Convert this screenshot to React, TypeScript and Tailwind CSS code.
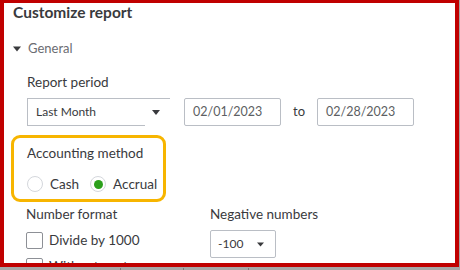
const font = { fontFamily: '"Lato", "Open Sans", sans-serif' };

const Caret = ({ className = '' }: { className?: string }) => (
  <svg viewBox="0 0 10 6" className={className} fill="currentColor">
    <path d="M0 0h10L5 6z" />
  </svg>
);

const DateInput = ({ value }: { value: string }) => (
  <div className="w-[97px] h-[28px] border border-[#babec5] rounded-[2px] flex items-center pl-[8px] text-[12.5px] text-[#5d5f63]">
    {value}
  </div>
);

const Radio = ({ checked, label }: { checked?: boolean; label: string }) => (
  <div className="flex items-center gap-[7px]">
    <span className="w-[16px] h-[16px] rounded-full border border-[#d4d7dc] flex items-center justify-center">
      {checked && <span className="w-[9px] h-[9px] rounded-full bg-[#2ca01c]" />}
    </span>
    <span className="text-[13.5px] text-[#393a3d]">{label}</span>
  </div>
);

export default function App() {
  return (
    <div className="relative w-[460px] h-[270px] bg-[#a6a6a6] overflow-hidden" style={font}>
      <div className="w-[459px] h-[268px] -mt-px border-4 border-[#c00000] bg-white overflow-hidden">
        <div className="pl-[9px] h-[20px] flex items-center text-[15.5px] font-bold text-[#393a3d]">
          Customize report
        </div>

        <div className="mt-[16px] pl-[9px] h-[20px] flex items-center gap-[7px] text-[13px] text-[#6b6c72]">
          <Caret className="w-[8px] h-[6px] text-[#393a3d]" />
          General
        </div>

        <div className="pl-[23px]">
          <div className="mt-[13px] h-[20px] flex items-center text-[13.5px] text-[#393a3d]">Report period</div>

          <div className="mt-[6px] flex items-center">
            <div className="w-[143px] h-[28px] border-l border-t border-[#babec5] flex flex-col">
              <div className="flex-1 flex items-center justify-between pl-[8px] pr-[10px] text-[12px] text-[#393a3d]">
                Last Month
                <Caret className="w-[8px] h-[5px] text-[#393a3d]" />
              </div>
              <div className="w-[117px] h-px bg-[#babec5]" />
            </div>
            <div className="ml-[14px]">
              <DateInput value="02/01/2023" />
            </div>
            <span className="mx-[12px] text-[13px] text-[#393a3d]">to</span>
            <DateInput value="02/28/2023" />
          </div>
        </div>

        <div className="mt-[9px] ml-[7px] w-[155px] h-[67px] border-[3px] border-[#f7b500] rounded-[9px] pl-[13px] pt-[5px]">
          <div className="h-[20px] flex items-center text-[13.5px] text-[#393a3d]">Accounting method</div>
          <div className="mt-[11px] flex items-center gap-[11px]">
            <Radio label="Cash" />
            <Radio checked label="Accrual" />
          </div>
        </div>

        <div className="pl-[22px] mt-[2px] flex gap-[43px]">
          <div className="w-[141px]">
            <div className="h-[20px] flex items-center text-[13.5px] text-[#393a3d]">Number format</div>
            <div className="mt-[6px] flex items-center gap-[6px]">
              <span className="w-[17px] h-[17px] border border-[#8d9096] rounded-[2px]" />
              <span className="text-[13.5px] text-[#393a3d]">Divide by 1000</span>
            </div>
            <div className="mt-[8px] flex items-start gap-[6px]">
              <span className="w-[17px] h-[17px] border border-[#8d9096] rounded-[2px]" />
              <span className="text-[13.5px] leading-[17px] text-[#393a3d]">Without cents</span>
            </div>
          </div>
          <div>
            <div className="h-[20px] flex items-center text-[13.5px] text-[#393a3d]">Negative numbers</div>
            <div className="mt-[6px] w-[66px] h-[28px] border border-[#babec5] rounded-[2px] flex items-center justify-between pl-[7px] pr-[11px] text-[12px] text-[#393a3d]">
              -100
              <Caret className="w-[7px] h-[5px] text-[#393a3d]" />
            </div>
          </div>
        </div>
      </div>
      {/* grid lines of the sheet behind */}
      <div className="absolute left-[120px] bottom-0 w-px h-[2px] bg-[#7a7a7a]" />
      <div className="absolute left-[183px] bottom-0 w-px h-[2px] bg-[#7a7a7a]" />
      <div className="absolute left-[248px] bottom-0 w-px h-[2px] bg-[#7a7a7a]" />
    </div>
  );
}
